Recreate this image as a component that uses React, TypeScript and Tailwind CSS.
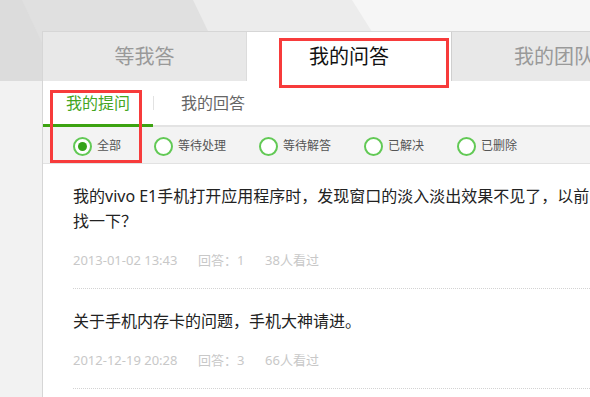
import React from 'react';

const filters = ['全部', '等待处理', '等待解答', '已解决', '已删除'];

const questions = [
  {
    title: '我的vivo E1手机打开应用程序时，发现窗口的淡入淡出效果不见了，以前的效果',
    more: '找一下？',
    date: '2013-01-02 13:43',
    answers: 1,
    views: 38,
  },
  {
    title: '关于手机内存卡的问题，手机大神请进。',
    more: '',
    date: '2012-12-19 20:28',
    answers: 3,
    views: 66,
  },
];

const Radio: React.FC<{ label: string; checked?: boolean }> = ({ label, checked }) => (
  <div className="flex items-center mr-[33px]">
    <span className="w-[19px] h-[19px] rounded-full border-2 border-[#62c955] bg-white flex items-center justify-center">
      {checked && <span className="w-[9px] h-[9px] rounded-full bg-[#35a31a]" />}
    </span>
    <span className="ml-[5px] text-[12px] text-[#555]">{label}</span>
  </div>
);

export default function App() {
  return (
    <div className="relative w-[590px] h-[397px] overflow-hidden bg-[#f2f2f2] font-['Noto_Sans','Noto_Sans_CJK_SC',sans-serif]">
      {/* faceted banner behind the panel */}
      <svg className="absolute left-0 top-0" width="590" height="81" viewBox="0 0 590 81">
        <rect width="590" height="81" fill="#f6f6f6" />
        <polygon points="0,0 352,0 403,81 0,81" fill="#ececec" />
        <polygon points="0,0 193,0 232,81 0,81" fill="#e0e0e0" />
        <polygon points="0,0 22,0 60,81 0,81" fill="#dcdcdc" />
      </svg>

      <div className="relative pl-[42px] pt-[31px]">
        <div className="w-[660px] bg-white border-l border-t border-[#d6d6d6]">
          {/* main tabs */}
          <div className="flex h-[49px]">
            <div className="w-[204px] bg-[#e8e8e8] border-r border-[#dcdcdc] flex items-center justify-center text-[20px] text-[#999]">
              等我答
            </div>
            <div className="w-[205px] bg-white border-r border-[#cfcfcf] flex items-center justify-center text-[20px] text-[#111]">
              我的问答
            </div>
            <div className="w-[204px] bg-[#e8e8e8] flex items-center justify-center text-[20px] text-[#999]">
              我的团队
            </div>
          </div>

          {/* sub tabs */}
          <div className="flex h-[46px] border-b-2 border-[#e3e3e3]">
            <div className="w-[110px] -mb-[2px] border-b-[3px] border-[#3da311] flex items-center justify-center text-[16px] text-[#45a61f]">
              我的提问
            </div>
            <div className="w-px h-[14px] self-center bg-[#e2e2e2]" />
            <div className="pl-[27px] flex items-center text-[16px] text-[#666]">我的回答</div>
          </div>

          {/* filters */}
          <div className="flex items-center h-[37px] pt-[2px] pl-[30px] bg-[#f3f3f3] border-b border-[#e2e2e2]">
            {filters.map((f, i) => (
              <Radio key={f} label={f} checked={i === 0} />
            ))}
          </div>

          {/* question list */}
          <div className="pl-[30px] pb-10">
            {questions.map((q) => (
              <div key={q.date} className="pt-5 pb-[18px] border-b border-dotted border-[#d3d3d3]">
                <p className="text-[16px] leading-[25px] text-[#222] whitespace-nowrap">
                  {q.title}
                  {q.more && (
                    <>
                      <br />
                      {q.more}
                    </>
                  )}
                </p>
                <div className="flex mt-4 text-[13px] leading-[20px] text-[#c8c8c8]">
                  <span className="w-[125px]">{q.date}</span>
                  <span className="w-[67px]">回答：{q.answers}</span>
                  <span>{q.views}人看过</span>
                </div>
              </div>
            ))}
          </div>
        </div>
      </div>

      {/* red annotation boxes */}
      <div className="absolute left-[279px] top-[38px] w-[170px] h-[50px] border-[3px] border-[#f73b3b]" />
      <div className="absolute left-[50px] top-[90px] w-[92px] h-[73px] border-[3px] border-[#f73b3b]" />
    </div>
  );
}
